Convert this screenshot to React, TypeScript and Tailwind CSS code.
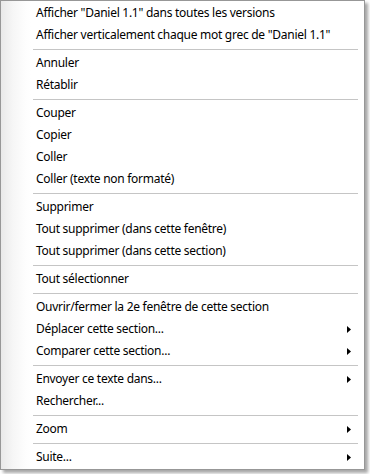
import React from "react";

type Item = { label: string; sub?: boolean } | "sep";

const items: Item[] = [
  { label: 'Afficher "Daniel 1.1" dans toutes les versions' },
  { label: 'Afficher verticalement chaque mot grec de "Daniel 1.1"' },
  "sep",
  { label: "Annuler" },
  { label: "Rétablir" },
  "sep",
  { label: "Couper" },
  { label: "Copier" },
  { label: "Coller" },
  { label: "Coller (texte non formaté)" },
  "sep",
  { label: "Supprimer" },
  { label: "Tout supprimer (dans cette fenêtre)" },
  { label: "Tout supprimer (dans cette section)" },
  "sep",
  { label: "Tout sélectionner" },
  "sep",
  { label: "Ouvrir/fermer la 2e fenêtre de cette section" },
  { label: "Déplacer cette section...", sub: true },
  { label: "Comparer cette section...", sub: true },
  "sep",
  { label: "Envoyer ce texte dans...", sub: true },
  { label: "Rechercher..." },
  "sep",
  { label: "Zoom", sub: true },
  "sep",
  { label: "Suite...", sub: true },
];

function Arrow() {
  return (
    <svg width="4" height="7" viewBox="0 0 4 7" className="block">
      <path d="M0 0 L4 3.5 L0 7 Z" fill="#000" />
    </svg>
  );
}

export default function App() {
  return (
    <div className="w-[370px] h-[474px] bg-white relative overflow-hidden">
      <div className="w-[365px] h-[470px] relative shadow-[3px_3px_3px_rgba(0,0,0,0.35)]">
        <div
          className="w-full h-full border border-[#979797] bg-[linear-gradient(to_right,#e9e9e9_0px,#f6f6f6_12px,#fdfdfd_24px,#ffffff_30px)] py-px text-[12px] text-black"
          style={{ fontFamily: '"Noto Sans", "Open Sans", sans-serif' }}
        >
          {items.map((it, i) =>
            it === "sep" ? (
              <div key={i} className="h-[6px] flex items-center pl-[32px] pr-[6px]">
                <div className="h-px w-full bg-[#c5c5c5]" />
              </div>
            ) : (
              <div key={i} className="h-[22px] flex items-center pl-[35px] pr-[13px]">
                <span className="flex-1 whitespace-nowrap leading-none tracking-[-0.27px]">{it.label}</span>
                {it.sub && <Arrow />}
              </div>
            )
          )}
        </div>
      </div>
    </div>
  );
}
